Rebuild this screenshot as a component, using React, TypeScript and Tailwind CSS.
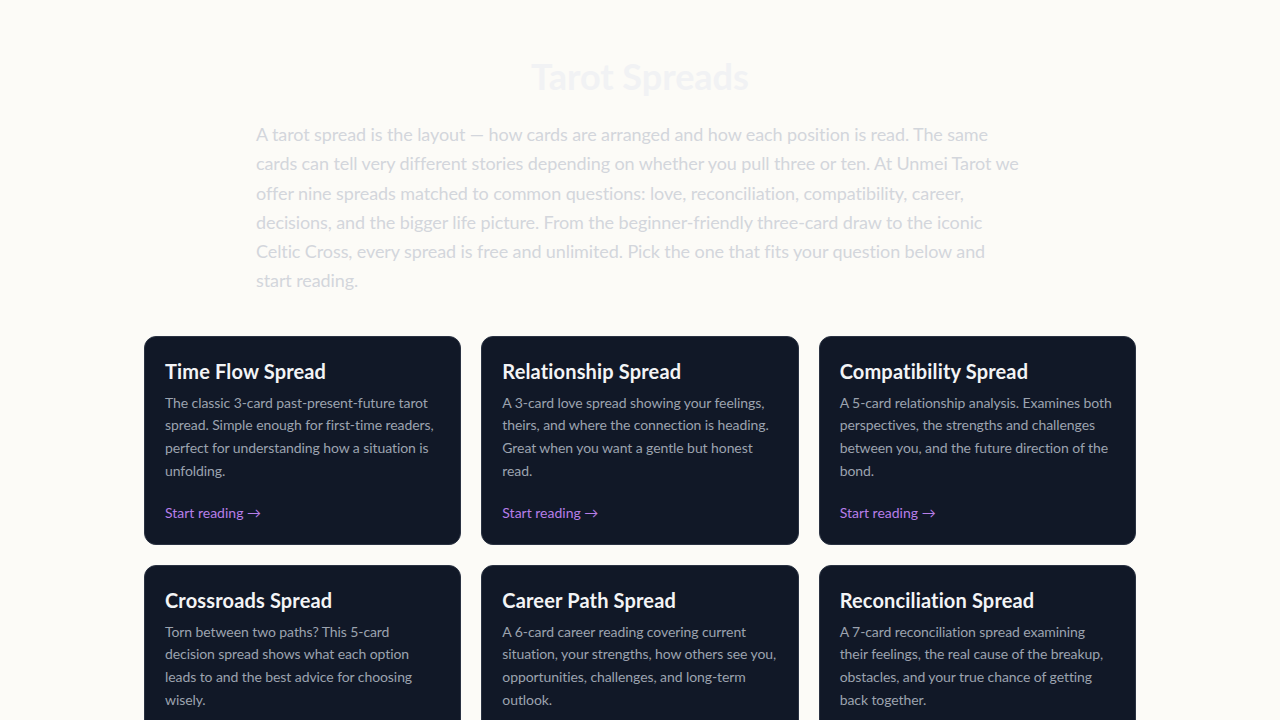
const spreads = [
  {
    title: 'Time Flow Spread',
    desc: 'The classic 3-card past-present-future tarot spread. Simple enough for first-time readers, perfect for understanding how a situation is unfolding.',
  },
  {
    title: 'Relationship Spread',
    desc: 'A 3-card love spread showing your feelings, theirs, and where the connection is heading. Great when you want a gentle but honest read.',
  },
  {
    title: 'Compatibility Spread',
    desc: 'A 5-card relationship analysis. Examines both perspectives, the strengths and challenges between you, and the future direction of the bond.',
  },
  {
    title: 'Crossroads Spread',
    desc: 'Torn between two paths? This 5-card decision spread shows what each option leads to and the best advice for choosing wisely.',
  },
  {
    title: 'Career Path Spread',
    desc: 'A 6-card career reading covering current situation, your strengths, how others see you, opportunities, challenges, and long-term outlook.',
  },
  {
    title: 'Reconciliation Spread',
    desc: 'A 7-card reconciliation spread examining their feelings, the real cause of the breakup, obstacles, and your true chance of getting back together.',
  },
  {
    title: 'Horseshoe Spread',
    desc: 'A 7-card horseshoe spread for a broad look at a question: past influences, hidden factors, advice, and the likely outcome.',
  },
  {
    title: 'Year Ahead Spread',
    desc: 'A 12-card spread with one card for each month, giving you a map of the themes and energies of the coming year.',
  },
  {
    title: 'Celtic Cross Spread',
    desc: 'The iconic 10-card Celtic Cross. A deep, detailed reading of your situation, inner state, obstacles, hopes, and final outcome.',
  },
];

export default function App() {
  return (
    <div
      className="min-h-screen bg-[#fcfbf7]"
      style={{ fontFamily: 'Lato, "Open Sans", sans-serif' }}
    >
      <div className="max-w-5xl mx-auto px-4 pt-14 pb-16">
        <h1 className="text-4xl font-bold text-center text-[#f1f2f4] mb-6">Tarot Spreads</h1>
        <p className="max-w-3xl mx-auto text-lg leading-relaxed tracking-[-0.1px] text-[#d3d6dc] mb-10">
          A tarot spread is the layout — how cards are arranged and how each position is read. The same
          cards can tell very different stories depending on whether you pull three or ten. At Unmei Tarot we
          offer nine spreads matched to common questions: love, reconciliation, compatibility, career,
          decisions, and the bigger life picture. From the beginner-friendly three-card draw to the iconic
          Celtic Cross, every spread is free and unlimited. Pick the one that fits your question below and
          start reading.
        </p>

        <div className="grid grid-cols-3 gap-5">
          {spreads.map((s) => (
            <a
              key={s.title}
              href="#"
              className="block bg-[#111827] border border-[#2a3242] rounded-xl px-5 pt-5 pb-[21px]"
            >
              <h2 className="text-xl font-bold tracking-[0.15px] text-[#f3f4f6] mb-[7px]">{s.title}</h2>
              <p className="text-sm leading-relaxed tracking-[-0.08px] text-[#9ca3af]">{s.desc}</p>
              <div className="mt-5 text-sm text-[#b77ee8]">Start reading →</div>
            </a>
          ))}
        </div>
      </div>
    </div>
  );
}
